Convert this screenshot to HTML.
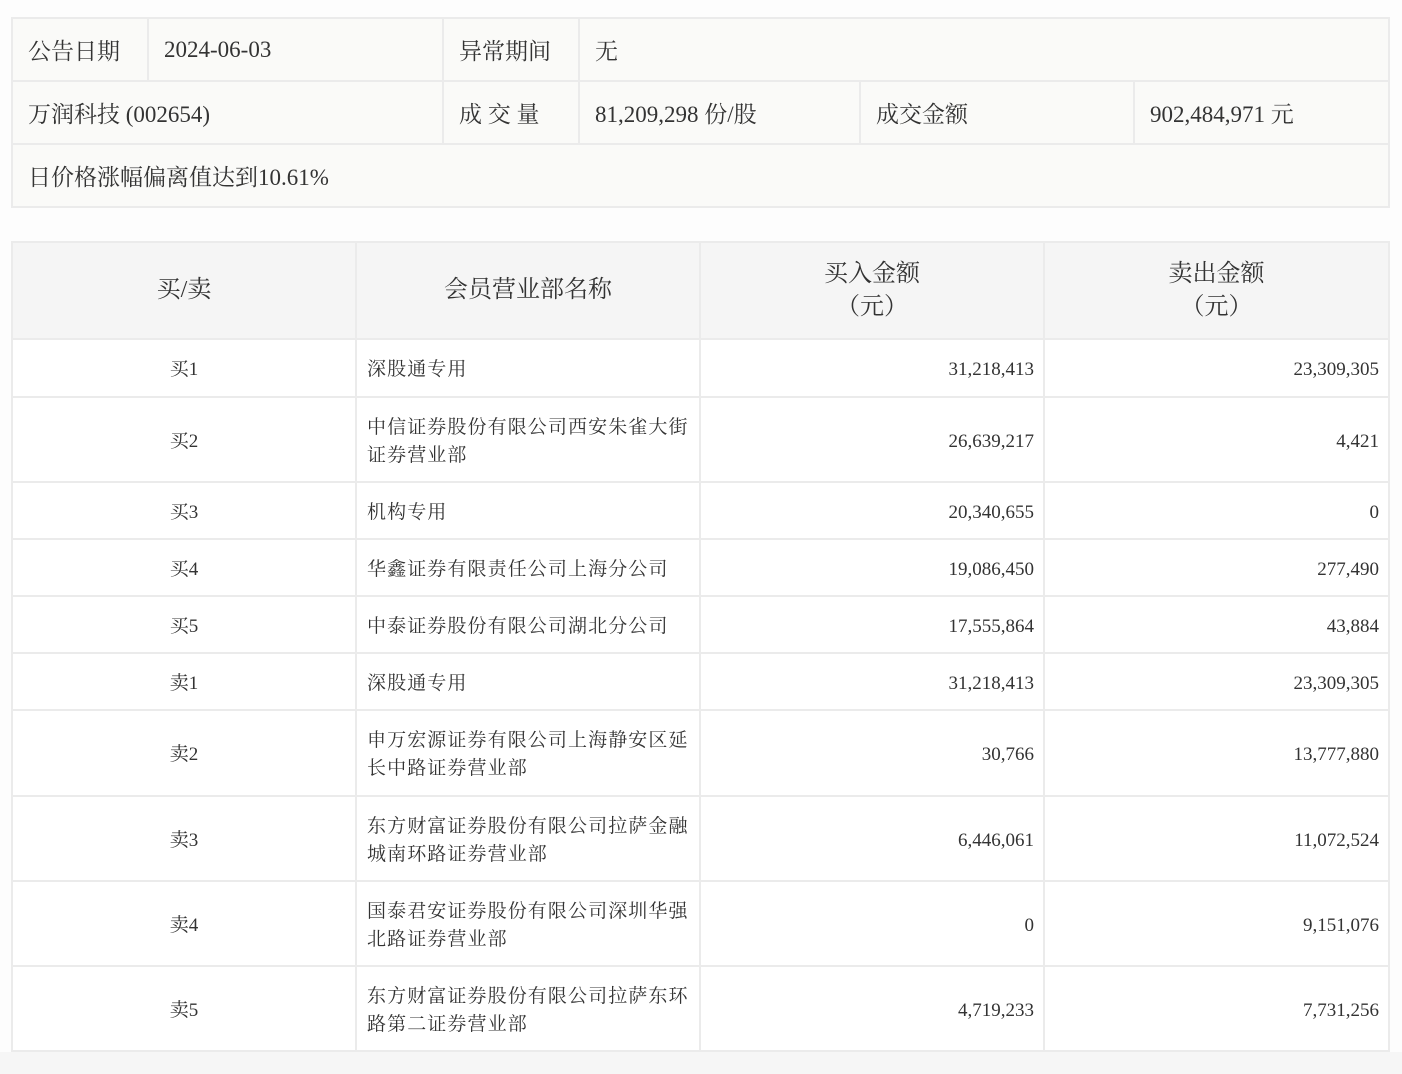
<!DOCTYPE html>
<html><head><meta charset="utf-8"><style>
html,body{margin:0;padding:0;background:#fdfdfd;width:1402px;height:1074px;overflow:hidden;}
body{font-family:"Liberation Serif","Noto Serif CJK SC",serif;color:#333;position:relative;}
table{border-collapse:collapse;table-layout:fixed;position:absolute;left:11px;}
td,th{border:2px solid #ebebeb;padding:0;overflow:hidden;}
#t1{top:17px;width:1377px;background:#fafaf8;font-size:23px;}
#t1 td{height:61px;padding-left:15px;}
#t2{top:241px;width:1377px;background:#fff;font-size:19px;}
#t2 th{background:#f5f5f5;font-weight:normal;font-size:24px;height:95px;line-height:33px;}
#t2 td{line-height:28px;padding-top:4px;}
#t2 td.c{text-align:center;}
#t2 td.n{padding-left:10px;padding-right:4px;letter-spacing:1.1px;}
#t2 td.r{text-align:right;padding-right:9px;}
.bot{position:absolute;left:0;top:1052px;width:1402px;height:22px;background:#f6f6f6;}
</style></head><body>
<table id="t1">
<colgroup><col style="width:136px"><col style="width:295px"><col style="width:136px"><col style="width:281px"><col style="width:274px"><col style="width:255px"></colgroup>
<tr><td>公告日期</td><td>2024-06-03</td><td>异常期间</td><td colspan="3">无</td></tr>
<tr><td colspan="2">万润科技 (002654)</td><td>成 交 量</td><td>81,209,298 份/股</td><td>成交金额</td><td>902,484,971 元</td></tr>
<tr><td colspan="6">日价格涨幅偏离值达到10.61%</td></tr>
</table>
<table id="t2">
<colgroup><col style="width:344px"><col style="width:344px"><col style="width:344px"><col style="width:345px"></colgroup>
<tr><th>买/卖</th><th>会员营业部名称</th><th>买入金额<br>（元）</th><th>卖出金额<br>（元）</th></tr>
<tr style="height:58px"><td class="c">买1</td><td class="n">深股通专用</td><td class="r">31,218,413</td><td class="r">23,309,305</td></tr>
<tr style="height:85px"><td class="c">买2</td><td class="n">中信证券股份有限公司西安朱雀大街证券营业部</td><td class="r">26,639,217</td><td class="r">4,421</td></tr>
<tr style="height:57px"><td class="c">买3</td><td class="n">机构专用</td><td class="r">20,340,655</td><td class="r">0</td></tr>
<tr style="height:57px"><td class="c">买4</td><td class="n">华鑫证券有限责任公司上海分公司</td><td class="r">19,086,450</td><td class="r">277,490</td></tr>
<tr style="height:57px"><td class="c">买5</td><td class="n">中泰证券股份有限公司湖北分公司</td><td class="r">17,555,864</td><td class="r">43,884</td></tr>
<tr style="height:57px"><td class="c">卖1</td><td class="n">深股通专用</td><td class="r">31,218,413</td><td class="r">23,309,305</td></tr>
<tr style="height:86px"><td class="c">卖2</td><td class="n">申万宏源证券有限公司上海静安区延长中路证券营业部</td><td class="r">30,766</td><td class="r">13,777,880</td></tr>
<tr style="height:85px"><td class="c">卖3</td><td class="n">东方财富证券股份有限公司拉萨金融城南环路证券营业部</td><td class="r">6,446,061</td><td class="r">11,072,524</td></tr>
<tr style="height:85px"><td class="c">卖4</td><td class="n">国泰君安证券股份有限公司深圳华强北路证券营业部</td><td class="r">0</td><td class="r">9,151,076</td></tr>
<tr style="height:85px"><td class="c">卖5</td><td class="n">东方财富证券股份有限公司拉萨东环路第二证券营业部</td><td class="r">4,719,233</td><td class="r">7,731,256</td></tr>
</table>
<div class="bot"></div>
</body></html>
